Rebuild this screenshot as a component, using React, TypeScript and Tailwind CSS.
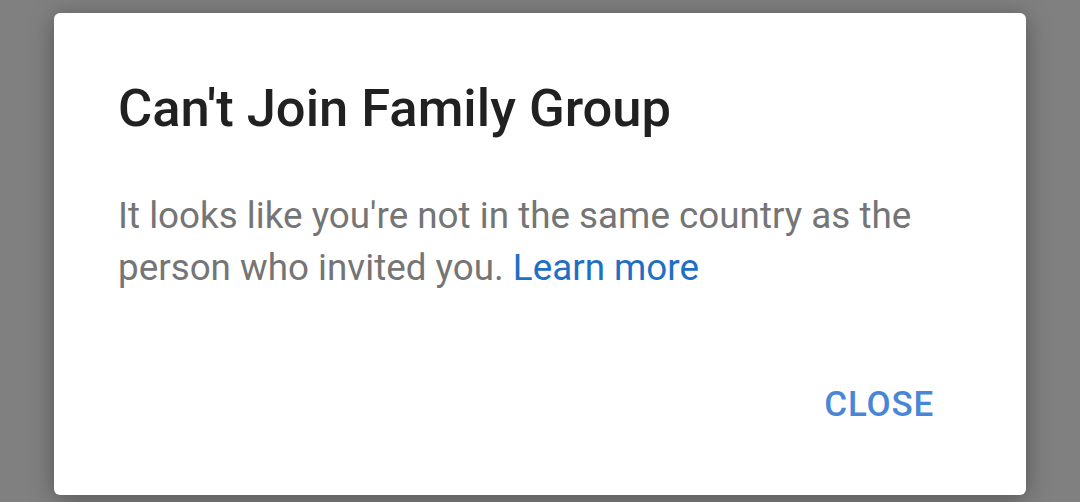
export default function App() {
  return (
    <div
      className="w-[1080px] h-[502px] bg-[#808080] overflow-hidden pt-[13px] pl-[54px]"
      style={{ fontFamily: "Roboto, 'Noto Sans', sans-serif" }}
    >
      <div className="w-[972px] h-[482px] bg-white rounded-[6px] shadow-[0_4px_24px_rgba(0,0,0,0.35)] flex flex-col pl-[64px] pr-[92px] pt-[65px]">
        <h1 className="text-[52.5px] leading-[60px] font-medium text-[#212121]">
          Can't Join Family Group
        </h1>
        <p className="mt-[52px] text-[36.8px] leading-[52px] text-[#757575]">
          It looks like you're not in the same country as the person who
          invited you. <span className="text-[#1f6fc5]">Learn more</span>
        </p>
        <div className="flex justify-end mt-[91px]">
          <span className="text-[35px] leading-[40px] font-medium tracking-[0.8px] text-[#4a86d8]">
            CLOSE
          </span>
        </div>
      </div>
    </div>
  );
}
